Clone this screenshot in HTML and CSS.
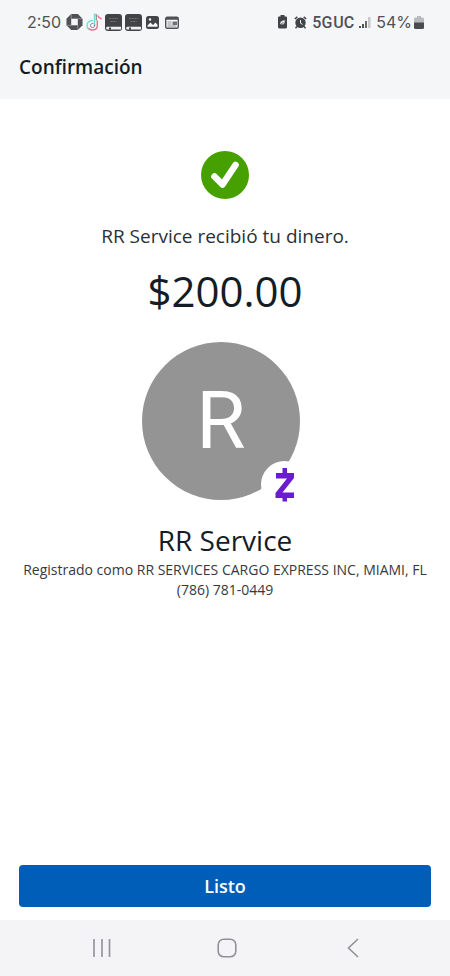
FILE: index.html
```html
<!DOCTYPE html>
<html lang="es">
<head>
<meta charset="utf-8">
<meta name="viewport" content="width=device-width, initial-scale=1">
<title>Confirmación</title>
<link rel="stylesheet" href="styles.css">
</head>
<body>
<div class="status">
  <div class="status-group">
    <span class="time">2:50</span>
    <svg width="17" height="18" viewBox="0 0 18 18"><path d="M5.500.5h7l5 5v7l-5 5h-7l-5-5v-7z" fill="#505155"/><path d="M5.500 5.500h7v7h-7z" fill="#f5f6f8"/><path d="M5.500 5.500V.5M12.500 5.500h5M12.500 12.500v5M5.500 12.500h-5" stroke="#f5f6f8" stroke-width=".4"/></svg>
    <svg width="16" height="18" viewBox="0 0 16 18" fill="none" stroke-width="1.400" stroke-linecap="round"><path stroke="#6fdcd9" d="M8.500 12.500V1.500h2M6.500 7.500C3 7.500 1 10 1 12.500c0 1.500.6 2.600 1.500 3.500"/><path stroke="#ee6d8c" d="M12 3c.5 1.500 1.500 2.500 3.200 2.700M11.300 8v4.500c0 3-2.200 4.500-4.800 4.500-1.500 0-2.700-.5-3.500-1.300"/><path stroke="#7b7c86" stroke-width="1" d="M8.800 12c0 1.700-1 2.600-2.200 2.600S4.500 13.700 4.500 12.500s1-2.300 2.500-2.200M10.300 2v5"/></svg>
    <svg width="17" height="17" viewBox="0 0 17 17"><rect width="17" height="17" rx="3" fill="#424346"/><path d="M4 4.500h9M5.500 7.500h6" stroke="#717276" stroke-dasharray="2 .6"/><path d="M2.500 12.800H16v2.700H2.500a1.300 1.300 0 010-2.700z" fill="#f0f1f3"/><path d="M4 13.500h2V16l-1-.8-1 .8z" fill="#424346"/></svg>
    <svg width="17" height="17" viewBox="0 0 17 17"><rect width="17" height="17" rx="3" fill="#424346"/><path d="M4 4.500h9M5.500 7.500h6" stroke="#717276" stroke-dasharray="2 .6"/><path d="M2.500 12.800H16v2.700H2.500a1.300 1.300 0 010-2.700z" fill="#f0f1f3"/><path d="M4 13.500h2V16l-1-.8-1 .8z" fill="#424346"/></svg>
    <svg class="photo" width="13" height="13" viewBox="0 0 13 13"><rect width="13" height="13" rx="2.500" fill="#434447"/><path d="M1.500 9.500l3-3L7 9l2.500-2.500 2 2.300v2h-10z" fill="#f5f6f8"/><circle cx="4" cy="3.500" r="1.200" fill="#f5f6f8"/></svg>
    <svg class="news" width="14" height="13" viewBox="0 0 14 13"><rect x=".7" y="1.200" width="12.600" height="11" rx="1.500" fill="#f5f6f8" stroke="#505155" stroke-width="1.400"/><path d="M1 2.500h12" stroke="#505155" stroke-width="2.500"/><path d="M2.500 6h4M2.500 8h4M2.500 10h9" stroke="#909195"/><path d="M7.500 5.500h4.500V9H7.500z" fill="#707175"/></svg>
  </div>
  <div class="status-group status-end">
    <svg width="9" height="14" viewBox="0 0 9 14"><path d="M2.500 0h4v1.500H8a1 1 0 011 1V12a1.500 1.500 0 01-1.500 1.500h-6A1.500 1.500 0 010 12V2.500a1 1 0 011-1h1.500z" fill="#424346"/><path d="M2 9.500C1.500 6.500 4 5 7.200 5c0 3.500-2 5.500-4.200 4.500l2.500-2.500" fill="#f5f6f8" stroke="#424346" stroke-width=".6"/></svg>
    <svg class="alarm" width="13" height="13" viewBox="0 0 13 13"><circle cx="6.500" cy="6.800" r="5.200" fill="#424346"/><path d="M.8 3L3.300.9M12.200 3L9.700.9M3 10.500l-1.500 1.800M10 10.500l1.500 1.800" stroke="#424346" stroke-width="1.500"/><path d="M6.500 4v3.200l2 1.200" fill="none" stroke="#f5f6f8"/></svg>
    <span class="net"><span>5G</span><span>UC</span></span>
    <svg width="12" height="13" viewBox="0 0 12 13"><path d="M0 10h2v2H0zM3 8h2v4H3z" fill="#505155"/><path d="M6 5h2v7H6z" fill="#66676a"/><path d="M9 1h2.500v11H9z" fill="#c6c7c9"/></svg>
    <span>54%</span>
    <svg class="battery" width="10" height="13" viewBox="0 0 10 13"><path d="M3 0h4v1.500h1.500A1.500 1.500 0 0110 3v4H0V3a1.500 1.500 0 011.500-1.500H3z" fill="#b9babc"/><path d="M0 6.500h10v5A1.500 1.500 0 018.500 13h-7A1.500 1.500 0 010 11.500z" fill="#4a4b4e"/></svg>
  </div>
</div>
<header class="header"><h1>Confirmación</h1></header>
<main class="content">
  <svg class="check" viewBox="0 0 48 48" role="img" aria-label="Completado"><circle cx="24" cy="24" r="24" fill="#46a000"/><path d="M13.500 25.500l8 8L34.500 14" fill="none" stroke="#fff" stroke-width="6.600" stroke-linecap="round" stroke-linejoin="round"/></svg>
  <p class="message">RR Service recibió tu dinero.</p>
  <p class="amount">$200.00</p>
  <div class="avatar-wrap">
    <div class="avatar">R</div>
    <span class="badge"><svg width="22" height="36" viewBox="0 0 22 36" role="img" aria-label="Zelle"><path d="M8.500 1h4.500v5h7v5L8.500 25.500H20V31h-7v3.500H8.500V31H1.500v-5L13 11.500H2V6h6.500z" fill="#6b1cd1"/></svg></span>
  </div>
  <h2 class="name">RR Service</h2>
  <p class="detail">Registrado como RR SERVICES CARGO EXPRESS INC, MIAMI, FL</p>
  <p class="detail">(786) 781-0449</p>
</main>
<footer class="actions"><button class="done" type="button">Listo</button></footer>
<nav class="system-nav">
  <button type="button" aria-label="Recientes"><svg width="20" height="20" viewBox="0 0 20 20"><path d="M2 1v18M10 1v18M17.500 1v18" stroke="#929296" stroke-width="1.600"/></svg></button>
  <button type="button" aria-label="Inicio"><svg width="20" height="20" viewBox="0 0 20 20"><rect x="1.200" y="1.200" width="17.600" height="17.600" rx="5.500" fill="none" stroke="#929296" stroke-width="1.600"/></svg></button>
  <button type="button" aria-label="Atrás"><svg width="20" height="20" viewBox="0 0 20 20"><path d="M16 1L6.500 10l9.500 9" fill="none" stroke="#929296" stroke-width="1.600"/></svg></button>
</nav>
</body>
</html>
```
FILE: styles.css
```css
* { box-sizing: border-box; }

body {
  margin: 0;
  min-height: 100vh;
  display: flex;
  flex-direction: column;
  background: #fff;
  color: #141c24;
  font-family: "Open Sans", sans-serif;
}

h1, h2, p { margin: 0; font-weight: 400; }
svg { display: block; flex: none; }

.status {
  display: flex;
  justify-content: space-between;
  height: 44px;
  padding: 0 26px 0 27px;
  background: #f5f6f8;
  color: #505155;
  font-family: Inter, sans-serif;
  font-size: 16px;
}

.status-group { display: flex; align-items: center; gap: 3px; }
.time { margin-right: 2px; }
.photo { margin-left: 1px; }
.news { margin-left: 3px; }
.status-end { gap: 5px; }
.alarm { margin-left: 2px; }
.battery { margin-left: -3px; }

.net {
  display: flex;
  gap: 1px;
  font-family: Roboto, sans-serif;
  font-weight: 500;
}

.header {
  height: 55px;
  padding: 11px 19px;
  background: #f5f6f8;
}

.header h1 {
  font-size: 19px;
  line-height: 24px;
  font-weight: 600;
}

.content {
  flex: 1;
  display: flex;
  flex-direction: column;
  align-items: center;
  padding: 52px 19px 24px;
  text-align: center;
}

.check { width: 48px; height: 48px; }

.message {
  margin-top: 25px;
  font-size: 19px;
  line-height: 24px;
  color: #2b3036;
}

.amount {
  margin-top: 15px;
  font-size: 42px;
  line-height: 56px;
}

.avatar-wrap {
  position: relative;
  width: 166px;
  height: 166px;
  margin-top: 23px;
}

.avatar {
  display: flex;
  align-items: center;
  justify-content: center;
  width: 158px;
  height: 158px;
  border-radius: 50%;
  background: #949494;
  color: #fff;
  font-family: Roboto, sans-serif;
  font-size: 80px;
  line-height: 80px;
}

.badge {
  position: absolute;
  right: 0;
  bottom: 0;
  display: flex;
  align-items: center;
  justify-content: center;
  width: 47px;
  height: 47px;
  border-radius: 50%;
  background: #fff;
}

.name {
  margin-top: 12px;
  font-size: 28px;
  line-height: 40px;
}

.detail {
  font-size: 14px;
  line-height: 20px;
  color: #36393d;
}

.actions { padding: 0 19px 13px; }

.done {
  display: block;
  width: 100%;
  height: 42px;
  border: 0;
  border-radius: 4px;
  background: #005eb8;
  color: #fff;
  font: 600 18px/24px "Open Sans", sans-serif;
}

.system-nav {
  display: flex;
  justify-content: space-around;
  padding: 0 36px 0 40px;
  background: #f4f4f7;
}

.system-nav button {
  display: flex;
  align-items: center;
  justify-content: center;
  width: 56px;
  height: 56px;
  padding: 0;
  border: 0;
  background: none;
}
```
